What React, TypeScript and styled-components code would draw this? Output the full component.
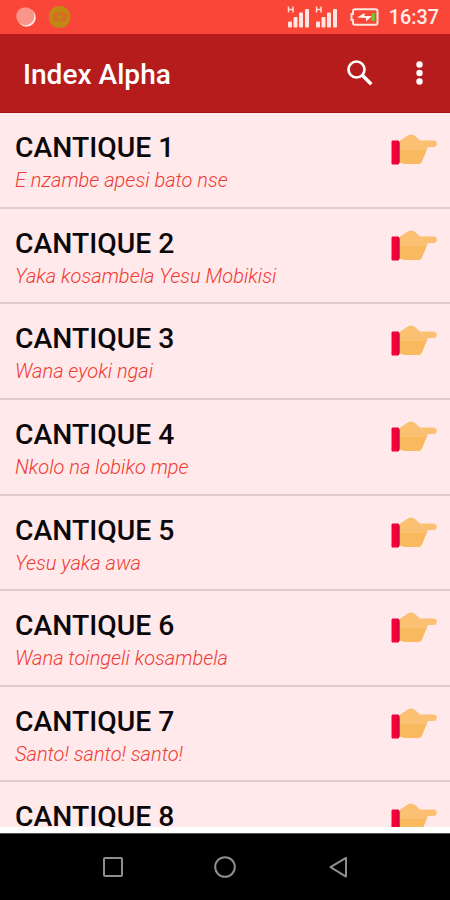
import React from 'react';
import styled, { createGlobalStyle } from 'styled-components';

const GlobalStyle = createGlobalStyle`
  * { box-sizing: border-box; }
  body { margin: 0; background: #000; font-family: Roboto, sans-serif; }
`;

const Screen = styled.div`
  display: flex;
  flex-direction: column;
  width: 450px;
  height: 900px;
  overflow: hidden;
  background: #fff;
`;

const StatusBar = styled.header`
  display: flex;
  align-items: center;
  justify-content: space-between;
  flex: none;
  height: 34px;
  padding: 0 11px 0 15px;
  background: #f94639;
  color: #ffefeb;
`;

const StatusGroup = styled.div<{ $gap: number }>`
  display: flex;
  align-items: center;
  gap: ${(p) => p.$gap}px;
`;

const Clock = styled.time`
  margin-left: 5px;
  font-size: 19.8px;
  font-weight: 500;
  line-height: 34px;
  padding-top: 1px;
`;

const AppBar = styled.div`
  display: flex;
  align-items: center;
  flex: none;
  height: 79px;
  padding: 0 17px 0 23px;
  background: #b61c1c;
  border-bottom: 1px solid #9f1114;
  color: #fff;
`;

const AppTitle = styled.h1`
  flex: 1;
  margin: 0;
  padding-top: 3px;
  font-size: 28.1px;
  font-weight: 500;
  line-height: 36px;
`;

const IconButton = styled.button`
  display: flex;
  padding: 0;
  border: 0;
  background: none;
  color: inherit;
  & + & { margin-left: 33px; }
`;

const List = styled.ul`
  flex: none;
  height: 714px;
  margin: 0;
  padding: 0;
  overflow: hidden;
  list-style: none;
  background: #ffe9eb;
`;

const Row = styled.li`
  display: flex;
  justify-content: space-between;
  height: 95.65px;
  padding: 18px 13px 0 15px;
  border-bottom: 2px solid #e0cbce;
`;

const SongTitle = styled.h2`
  margin: 0;
  color: #0c0809;
  font-size: 28.3px;
  font-weight: 500;
  line-height: 34px;
`;

const SongLine = styled.p`
  margin: 2px 0 0;
  color: #ef3b34;
  font-size: 20px;
  font-style: italic;
  font-weight: 300;
  line-height: 26px;
`;

const NavBar = styled.nav`
  display: flex;
  justify-content: center;
  flex: none;
  gap: 88.5px;
  height: 67px;
  margin-top: 6px;
  padding-top: 21px;
  border-top: 1px solid #555;
  background: #000;
`;

const Signal = () => (
  <svg width="23" height="22" viewBox="0 0 23 22" fill="#ffe6e0">
    <path d="M1.5 .5v6M6 .5v6M1.5 3.500H6" stroke="#ffd9d2" strokeWidth="1.5" fill="none" />
    <rect x="1" y="15.500" width="4" height="6" rx="1" />
    <rect x="6.500" y="11" width="4" height="10.500" rx="1" />
    <rect x="12" y="6.500" width="4" height="15" rx="1" />
    <rect x="18" y="3" width="4" height="18.500" rx="1" />
  </svg>
);

const BatteryIcon = styled.svg`
  margin-left: 7px;
`;

const Battery = () => (
  <BatteryIcon width="29" height="18" viewBox="0 0 29 18">
    <path d="M5 1.2h20.5q2 0 2 2v11.6q0 2-2 2H5q-2 0-2-2V12H1.5V6H3V3.200q0-2 2-2z" fill="none" stroke="#ffe6dc" strokeWidth="2" />
    <path d="M21.500 5H25v8h-3.500z" fill="#80bd35" />
    <path d="M7 9.500l7.500-4.500v3H22l-6 5.500V10z" fill="#fff5e8" />
  </BatteryIcon>
);

const HandIcon = styled.svg`
  flex: none;
  margin-top: 2px;
`;

const Hand = () => (
  <HandIcon width="46" height="32" viewBox="0 0 46 32">
    <path d="M8.500 8l7.500-5q4-3 8 0l5 4.500h13.500a3.200 3.200 0 0 1 0 6.500H37l-6 14q-1 3-4 3H16q-4 0-7.500-2z" fill="#fbc071" />
    <path d="M8.500 17h27L31 28q-1 3-4 3H16q-4 0-7.500-2z" fill="#f9b95f" />
    <path d="M1.500 7.500H6q2.500 0 2.500 3v18q0 3-2.500 3H1.500Q.500 31.500 .500 30v-21Q.500 7.500 1.500 7.500z" fill="#f50038" />
    <path d="M6 7.500q2.500 0 2.500 3v18q0 3-2.500 3z" fill="#cf0640" />
  </HandIcon>
);

const songs = [
  'E nzambe apesi bato nse',
  'Yaka kosambela Yesu Mobikisi',
  'Wana eyoki ngai',
  'Nkolo na lobiko mpe',
  'Yesu yaka awa',
  'Wana toingeli kosambela',
  'Santo! santo! santo!',
  '',
];

export default function App() {
  return (
    <>
      <GlobalStyle />
      <Screen>
        <StatusBar>
          <StatusGroup $gap={12}>
            <svg width="22" height="22" viewBox="0 0 22 22">
              <circle cx="11.500" cy="11.500" r="9.300" fill="#ffe5df" />
              <circle cx="10.300" cy="10.200" r="9" fill="#fa958c" />
            </svg>
            <svg width="22" height="24" viewBox="0 0 22 24">
              <circle cx="10.500" cy="12" r="11" fill="#bf8913" />
              <rect x="4.500" y="7.500" width="13" height="9" rx="2" fill="#d56d24" />
              <path d="M9 9.500l5 2.500-5 2.500z" fill="#b98e13" />
            </svg>
          </StatusGroup>
          <StatusGroup $gap={5}>
            <Signal />
            <Signal />
            <Battery />
            <Clock>16:37</Clock>
          </StatusGroup>
        </StatusBar>
        <AppBar>
          <AppTitle>Index Alpha</AppTitle>
          <IconButton aria-label="Search">
            <svg width="28" height="28" viewBox="0 0 28 28" fill="none" stroke="currentColor" strokeWidth="2.700">
              <circle cx="10.500" cy="10.500" r="8" />
              <path d="M16.300 16.300l9 9" strokeWidth="3.500" />
            </svg>
          </IconButton>
          <IconButton aria-label="More">
            <svg width="26" height="26" viewBox="0 0 26 26" fill="currentColor">
              <circle cx="12.500" cy="4.500" r="3.200" />
              <circle cx="12.500" cy="13" r="3.200" />
              <circle cx="12.500" cy="21.500" r="3.200" />
            </svg>
          </IconButton>
        </AppBar>
        <List>
          {songs.map((line, i) => (
            <Row key={i}>
              <div>
                <SongTitle>CANTIQUE {i + 1}</SongTitle>
                {line && <SongLine>{line}</SongLine>}
              </div>
              <Hand />
            </Row>
          ))}
        </List>
        <NavBar>
          <svg width="24" height="24" viewBox="0 0 24 24" fill="none" stroke="#8e8e8e" strokeWidth="2">
            <rect x="3" y="3" width="18" height="18" rx="1" />
          </svg>
          <svg width="24" height="24" viewBox="0 0 24 24" fill="none" stroke="#8e8e8e" strokeWidth="2">
            <circle cx="12" cy="12" r="9.800" />
          </svg>
          <svg width="24" height="24" viewBox="0 0 24 24" fill="none" stroke="#8e8e8e" strokeWidth="2">
            <path d="M20 2.800v18.800L4.500 12.200z" strokeLinejoin="round" />
          </svg>
        </NavBar>
      </Screen>
    </>
  );
}
